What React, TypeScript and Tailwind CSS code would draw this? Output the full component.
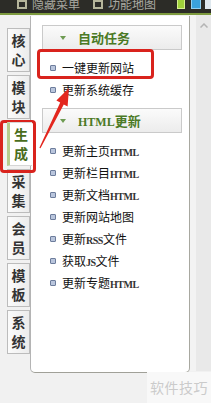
import React from "react";

const tabs = ["核心", "模块", "生成", "采集", "会员", "模板", "系统"];

function Bullet() {
  return <span className="w-[6px] h-[6px] rounded-[1px] border border-[#6d7d9c] bg-[#b9c5dc] shrink-0" />;
}

function Item({ cn, en, tail }: { cn: string; en?: string; tail?: string }) {
  return (
    <div className="h-[22px] flex items-center pl-[19px] gap-[6px]">
      <Bullet />
      <span className="text-[12px] leading-none text-[#111] whitespace-nowrap">
        {cn}
        {en && <span className="font-['Liberation_Serif',serif] text-[10px] tracking-[-0.5px] font-bold text-[#333]">{en}</span>}
        {tail}
      </span>
    </div>
  );
}

function Header({ children }: { children: React.ReactNode }) {
  return (
    <div className="ml-[11px] mr-[7px] h-[25px] border border-[#cacaca] bg-gradient-to-b from-[#fbfbfb] to-[#ececec] flex items-center pl-[17px]">
      <svg width="6" height="4" viewBox="0 0 6 4" className="mr-[12px]">
        <polygon points="0,0 6,0 3,4" fill="#6e9b52" />
      </svg>
      <span className="text-[13px] font-bold text-[#4b7a26] leading-none whitespace-nowrap">{children}</span>
    </div>
  );
}

export default function App() {
  return (
    <div className="relative w-[211px] h-[403px] overflow-hidden bg-[#f1f1f1] font-['Noto_Sans_CJK_SC','Liberation_Sans',sans-serif]">
      {/* top bar */}
      <div className="h-[15px] bg-[#2c2c27] border-b-2 border-[#7d9a3e] overflow-hidden">
        <div className="flex items-center -mt-[4px] h-[16px] whitespace-nowrap">
          <span className="shrink-0 ml-[17px] w-[10px] h-[9px] border-2 border-[#b5b59a] mr-[5px]" />
          <span className="shrink-0 text-[12px] text-[#a9a9a2] leading-none">隐藏菜单</span>
          <span className="shrink-0 ml-[13px] w-[10px] h-[9px] border-2 border-[#b5b59a] mr-[5px]" />
          <span className="shrink-0 text-[12px] text-[#a9a9a2] leading-none">功能地图</span>
          <span className="shrink-0 ml-[21px] w-[8px] h-[10px] bg-[#9fd13a] border border-[#d7f08f]" />
          <span className="shrink-0 ml-[6px] w-[10px] h-[10px] bg-[#3aa2dd] border border-[#8fd0f2]" />
          <span className="shrink-0 ml-[4px] w-[8px] h-[10px] bg-[#dfe8ee]" />
        </div>
      </div>

      <div className="flex">
        {/* left tabs */}
        <div className="w-[30px] shrink-0 pl-[7px] pt-[13px] flex flex-col gap-[3px]">
          {tabs.map((t) =>
            t === "生成" ? (
              <div
                key={t}
                className="relative z-10 w-[25px] h-[44px] bg-white border-l-[3px] border-[#b7cb8c] border-y border-y-[#d6d6d6] flex flex-col items-center justify-center text-[14px] leading-[19px] font-bold text-[#4a6d1c]"
              >
                <span>{t[0]}</span>
                <span>{t[1]}</span>
              </div>
            ) : (
              <div
                key={t}
                className="w-[23px] h-[44px] border border-[#bcbcbc] bg-gradient-to-r from-[#fbfbfb] to-[#ececec] flex flex-col items-center justify-center text-[14px] leading-[19px] font-bold text-[#333]"
              >
                <span>{t[0]}</span>
                <span>{t[1]}</span>
              </div>
            )
          )}
        </div>

        {/* main panel */}
        <div className="mt-[1px] w-[160px] h-[357px] shrink-0 bg-white border-l border-[#b4b4b4] border-r border-r-[#a8a8a0] border-b border-b-[#a0a098] rounded-b-[5px] pt-[9px]">
          <Header>自动任务</Header>
          <div className="py-[7px]">
            <Item cn="一键更新网站" />
            <Item cn="更新系统缓存" />
          </div>
          <Header>
            <span className="font-['Liberation_Serif',serif] text-[12px]">HTML</span>更新
          </Header>
          <div className="pt-[7px]">
            <Item cn="更新主页" en="HTML" />
            <Item cn="更新栏目" en="HTML" />
            <Item cn="更新文档" en="HTML" />
            <Item cn="更新网站地图" />
            <Item cn="更新" en="RSS" tail="文件" />
            <Item cn="获取" en="JS" tail="文件" />
            <Item cn="更新专题" en="HTML" />
          </div>
        </div>

        {/* right scroll area */}
        <div className="flex-1 h-[356px] bg-[#f3f3f3] flex">
          <div className="w-[6px]" />
          <div className="flex-1 bg-[#e9e9e9] flex justify-center pt-[8px]">
            <svg width="8" height="5" viewBox="0 0 8 5">
              <polyline points="0.5,4.5 4,1 7.5,4.5" fill="none" stroke="#b4b4b4" strokeWidth="1.5" />
            </svg>
          </div>
        </div>
      </div>

      {/* watermark */}
      <div className="absolute left-[147px] top-[372px] w-[64px] h-[31px] bg-[#f8f8f8] flex items-center justify-center">
        <span className="text-[14px] text-[#cbcbcb] tracking-[0.5px] whitespace-nowrap">软件技巧</span>
      </div>

      {/* annotations */}
      <div className="absolute left-[37px] top-[49px] w-[117px] h-[30px] border-[3px] border-[#d9231d] rounded-[4px] pointer-events-none" />
      <div className="absolute left-0 top-[120px] w-[36px] h-[53px] border-[3px] border-[#d9231d] rounded-[4px] pointer-events-none" />
      <svg className="absolute left-0 top-0 pointer-events-none" width="211" height="403" viewBox="0 0 211 403">
        <polygon
          points="69,88 67.6,106.5 63.8,104.5 40.5,148.3 39.4,147.7 60.2,102.6 56.4,100.6"
          fill="#e3261e"
        />
      </svg>
    </div>
  );
}
